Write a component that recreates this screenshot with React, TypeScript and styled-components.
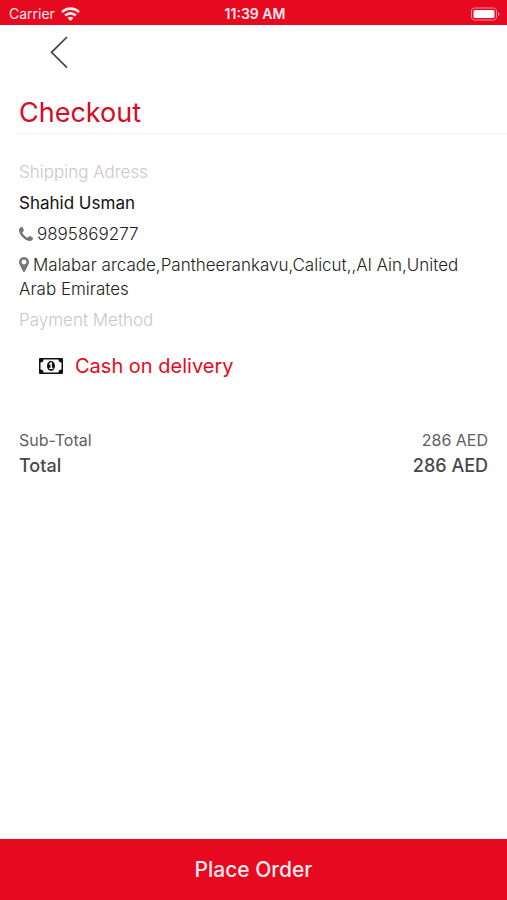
import React from "react";
import styled, { createGlobalStyle } from "styled-components";

const red = "#e60920";

const GlobalStyle = createGlobalStyle`
  *, *::before, *::after { box-sizing: border-box; }
  body {
    margin: 0;
    background: #fff;
    color: #333;
    font-family: Inter, "Liberation Sans", sans-serif;
  }
`;

const Screen = styled.div`
  display: flex;
  flex-direction: column;
  min-height: 100vh;
`;

const StatusBar = styled.header`
  display: grid;
  grid-template-columns: 1fr auto 1fr;
  align-items: center;
  height: 25px;
  padding: 2px 6px 0 9px;
  background: ${red};
  color: #ffe9ec;
  font-size: 14px;
  line-height: 20px;
`;

const Carrier = styled.div`
  display: flex;
  align-items: center;
  gap: 6px;
`;

const Clock = styled.time`
  font-weight: 600;
`;

const BatteryIcon = styled.svg`
  justify-self: end;
`;

const NavBar = styled.nav`
  display: flex;
  padding: 8px 46px 0;
`;

const BackButton = styled.button`
  display: flex;
  padding: 0;
  border: 0;
  background: none;
  cursor: pointer;
`;

const TitleBar = styled.div`
  margin: 24px 0 0 16px;
  padding: 0 3px 2px;
  border-bottom: 1px solid #f3f3f3;
`;

const Title = styled.h1`
  margin: 0;
  color: #d90a26;
  font-size: 27px;
  font-weight: 400;
  line-height: 36px;
`;

const Content = styled.main`
  flex: 1;
  padding: 26px 19px 24px;
`;

const SectionLabel = styled.h2`
  margin: 0;
  color: #cfc5c7;
  font-size: 17px;
  font-weight: 300;
  line-height: 24px;
`;

const Line = styled.p<{ $strong?: boolean }>`
  margin: 7px 0;
  max-width: 450px;
  color: ${(p) => (p.$strong ? "#111" : "#222")};
  font-size: 17px;
  font-weight: ${(p) => (p.$strong ? 400 : 300)};
  line-height: 24px;

  svg {
    margin-right: 4px;
    color: #777;
    vertical-align: -1px;
  }
`;

const PaymentOption = styled.div`
  display: flex;
  align-items: center;
  gap: 12px;
  padding: 19px 20px 47px;
  color: ${red};
  font-size: 20px;
  font-weight: 400;
  line-height: 30px;
`;

const Totals = styled.dl`
  margin: 0;
`;

const TotalRow = styled.div<{ $grand?: boolean }>`
  display: flex;
  justify-content: space-between;
  color: ${(p) => (p.$grand ? "#484848" : "#606060")};
  font-size: ${(p) => (p.$grand ? 18 : 16)}px;
  font-weight: ${(p) => (p.$grand ? 500 : 400)};
  line-height: 25px;

  dd { margin: 0; }
`;

const PlaceOrder = styled.button`
  height: 61px;
  border: 0;
  background: ${red};
  color: #ffe9ec;
  font-family: inherit;
  font-size: 21px;
  font-weight: 500;
  cursor: pointer;
`;

const Wifi = () => (
  <svg width="19" height="14" viewBox="0 0 19 14" fill="none" stroke="currentColor" strokeWidth="2.6" aria-hidden="true">
    <path d="M1 5.100C5.700.4 13.300.4 18 5.100" />
    <path d="M4.200 8.500c3-2.900 7.600-2.900 10.600 0" />
    <path d="M6.600 11c1.600-1.600 4.200-1.600 5.800 0L9.500 13.900z" fill="currentColor" stroke="none" />
  </svg>
);

const Battery = () => (
  <BatteryIcon width="30" height="14" viewBox="0 0 30 14" aria-label="Battery full" role="img">
    <rect x="0.500" y="1" width="25" height="12" rx="3" fill="none" stroke="#f68b96" />
    <rect x="2.500" y="3" width="21" height="8" rx="1.500" fill="#fff" />
    <path d="M27 5v4c2-.6 2-3.400 0-4z" fill="#f68b96" />
  </BatteryIcon>
);

const Phone = () => (
  <svg width="14" height="14" viewBox="0 128 1408 1408" fill="currentColor" aria-hidden="true">
    <path d="M1408 1240q0 27-10 70.500t-21 68.500q-21 50-122 106-94 51-186 51-27 0-52.500-3.500t-57.500-12.500-47.500-14.500-55.500-20.500-49-18q-98-35-175-83-128-79-264.500-215.500t-215.500-264.500q-48-77-83-175-3-9-18-49t-20.500-55.500-14.500-47.500-12.500-57.500-3.500-52.500q0-92 51-186 56-101 106-122 25-11 68.500-21t70.500-10q14 0 21 3 18 6 53 76 11 19 30 54t35 63.500 31 53.500q3 4 17.500 25t21.500 35.500 7 28.500q0 20-28.500 50t-62 55-62 53-28.500 46q0 9 5 22.500t8.500 20.500 14 24 11.500 19q76 137 174 235t235 174q2 1 19 11.500t24 14 20.500 8.500 22.500 5q18 0 46-28.500t53-62 55-62 50-28.500q14 0 28.500 7t35.500 21.500 25 17.500q25 15 53.500 31t63.500 35 54 30q70 35 76 53 3 7 3 21z" />
  </svg>
);

const Pin = () => (
  <svg width="10" height="15" viewBox="0 128 1024 1536" fill="currentColor" aria-hidden="true">
    <path d="M768 640q0-106-75-181t-181-75-181 75-75 181 75 181 181 75 181-75 75-181zm256 0q0 109-33 179l-364 774q-16 33-47.500 52t-67.500 19-67.500-19-46.500-52l-365-774q-33-70-33-179 0-212 150-362t362-150 362 150 150 362z" />
  </svg>
);

const Banknote = () => (
  <svg width="24" height="16" viewBox="0 0 24 16" aria-hidden="true">
    <rect width="24" height="16" rx="1" fill="#111" />
    <path d="M4.500 1.500h15a3 3 0 0 0 3 3v7a3 3 0 0 0-3 3h-15a3 3 0 0 0-3-3v-7a3 3 0 0 0 3-3z" fill="#fff" />
    <ellipse cx="12" cy="8" rx="4" ry="5" fill="#111" />
    <path d="M10 6l1.700-1.700h1.200v5.500h1.300V11h-4V9.800h1.300V6.400l-.7.600z" fill="#fff" />
  </svg>
);

export default function App() {
  return (
    <Screen>
      <GlobalStyle />
      <StatusBar>
        <Carrier>
          Carrier <Wifi />
        </Carrier>
        <Clock>11:39 AM</Clock>
        <Battery />
      </StatusBar>
      <NavBar>
        <BackButton type="button" aria-label="Back">
          <svg width="26" height="38" viewBox="0 0 26 38" fill="none" stroke="#444" strokeWidth="1.700">
            <path d="M21 4L5.500 19.300L21 34.600" />
          </svg>
        </BackButton>
      </NavBar>
      <TitleBar>
        <Title>Checkout</Title>
      </TitleBar>
      <Content>
        <SectionLabel>Shipping Adress</SectionLabel>
        <Line $strong>Shahid Usman</Line>
        <Line>
          <Phone />
          9895869277
        </Line>
        <Line>
          <Pin />
          Malabar arcade,Pantheerankavu,Calicut,,Al Ain,United Arab Emirates
        </Line>
        <SectionLabel>Payment Method</SectionLabel>
        <PaymentOption>
          <Banknote />
          Cash on delivery
        </PaymentOption>
        <Totals>
          <TotalRow>
            <dt>Sub-Total</dt>
            <dd>286 AED</dd>
          </TotalRow>
          <TotalRow $grand>
            <dt>Total</dt>
            <dd>286 AED</dd>
          </TotalRow>
        </Totals>
      </Content>
      <PlaceOrder type="button">Place Order</PlaceOrder>
    </Screen>
  );
}
